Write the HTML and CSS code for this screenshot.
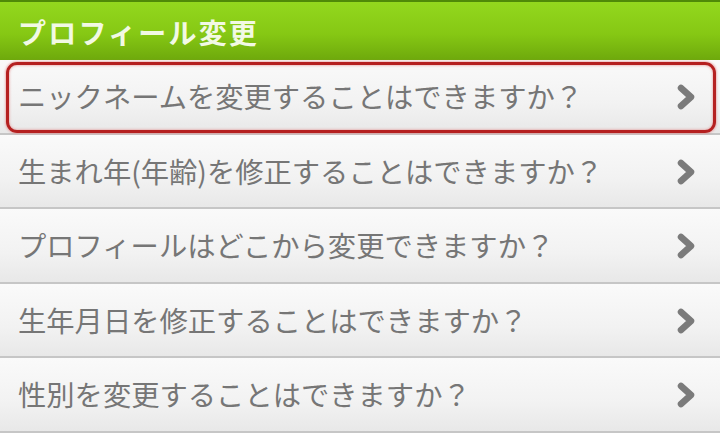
FILE: index.html
```html
<!DOCTYPE html>
<html lang="ja">
<head>
<meta charset="utf-8">
<link rel="stylesheet" href="styles.css">
</head>
<body>
<div class="page">
  <header class="head"><h1 class="title">プロフィール変更</h1></header>
  <ul class="list">
    <li class="row focused"><span class="label">ニックネームを変更することはできますか？</span><svg class="chev" viewBox="0 0 22 28"><polyline points="6,5 16,14 6,23"/></svg></li>
    <li class="row"><span class="label">生まれ年(年齢)を修正することはできますか？</span><svg class="chev" viewBox="0 0 22 28"><polyline points="6,5 16,14 6,23"/></svg></li>
    <li class="row"><span class="label">プロフィールはどこから変更できますか？</span><svg class="chev" viewBox="0 0 22 28"><polyline points="6,5 16,14 6,23"/></svg></li>
    <li class="row"><span class="label">生年月日を修正することはできますか？</span><svg class="chev" viewBox="0 0 22 28"><polyline points="6,5 16,14 6,23"/></svg></li>
    <li class="row"><span class="label">性別を変更することはできますか？</span><svg class="chev" viewBox="0 0 22 28"><polyline points="6,5 16,14 6,23"/></svg></li>
  </ul>
</div>
</body>
</html>
```
FILE: styles.css
```css
html, body {
  margin: 0;
  padding: 0;
  background: #f4f4f4;
}
.page {
  width: 720px;
  height: 433px;
  overflow: hidden;
  font-family: "Noto Sans CJK JP", "Noto Sans", sans-serif;
}
.head {
  height: 60px;
  box-sizing: border-box;
  border-top: 2px solid #4f8a08;
  background: linear-gradient(to bottom, #93d81e 0%, #86c814 55%, #6ea90c 100%);
  display: flex;
  align-items: center;
  padding-left: 18px;
}
.title {
  margin: 0;
  font-size: 28px;
  font-weight: 700;
  letter-spacing: 2.2px;
  color: #f2f9e4;
  line-height: 1;
  padding-top: 1px;
}
.list {
  list-style: none;
  margin: 0;
  padding: 0;
}
.row {
  position: relative;
  height: 72.5px;
  border-bottom: 2px solid #c6c6c6;
  background: linear-gradient(to bottom, #fafafa 0%, #f2f2f2 60%, #e8e8e8 100%);
  display: flex;
  align-items: center;
  padding: 0 23px 0 18px;
}
.label {
  flex: 1;
  font-size: 28.3px;
  color: #767676;
  line-height: 1;
  white-space: nowrap;
}
.chev {
  width: 22px;
  height: 28px;
  margin-top: 2px;
  fill: none;
  stroke: #7b7b7b;
  stroke-width: 6.5;
  stroke-linecap: round;
  stroke-linejoin: round;
}
.focused::after {
  content: "";
  position: absolute;
  left: 6px;
  right: 4px;
  top: 2px;
  bottom: 0;
  border: 3px solid #b52020;
  border-radius: 11px;
  box-shadow: 0 0 2px 1px rgba(230, 140, 140, 0.6), inset 0 0 2px 1px rgba(230, 140, 140, 0.5);
  pointer-events: none;
}
```
